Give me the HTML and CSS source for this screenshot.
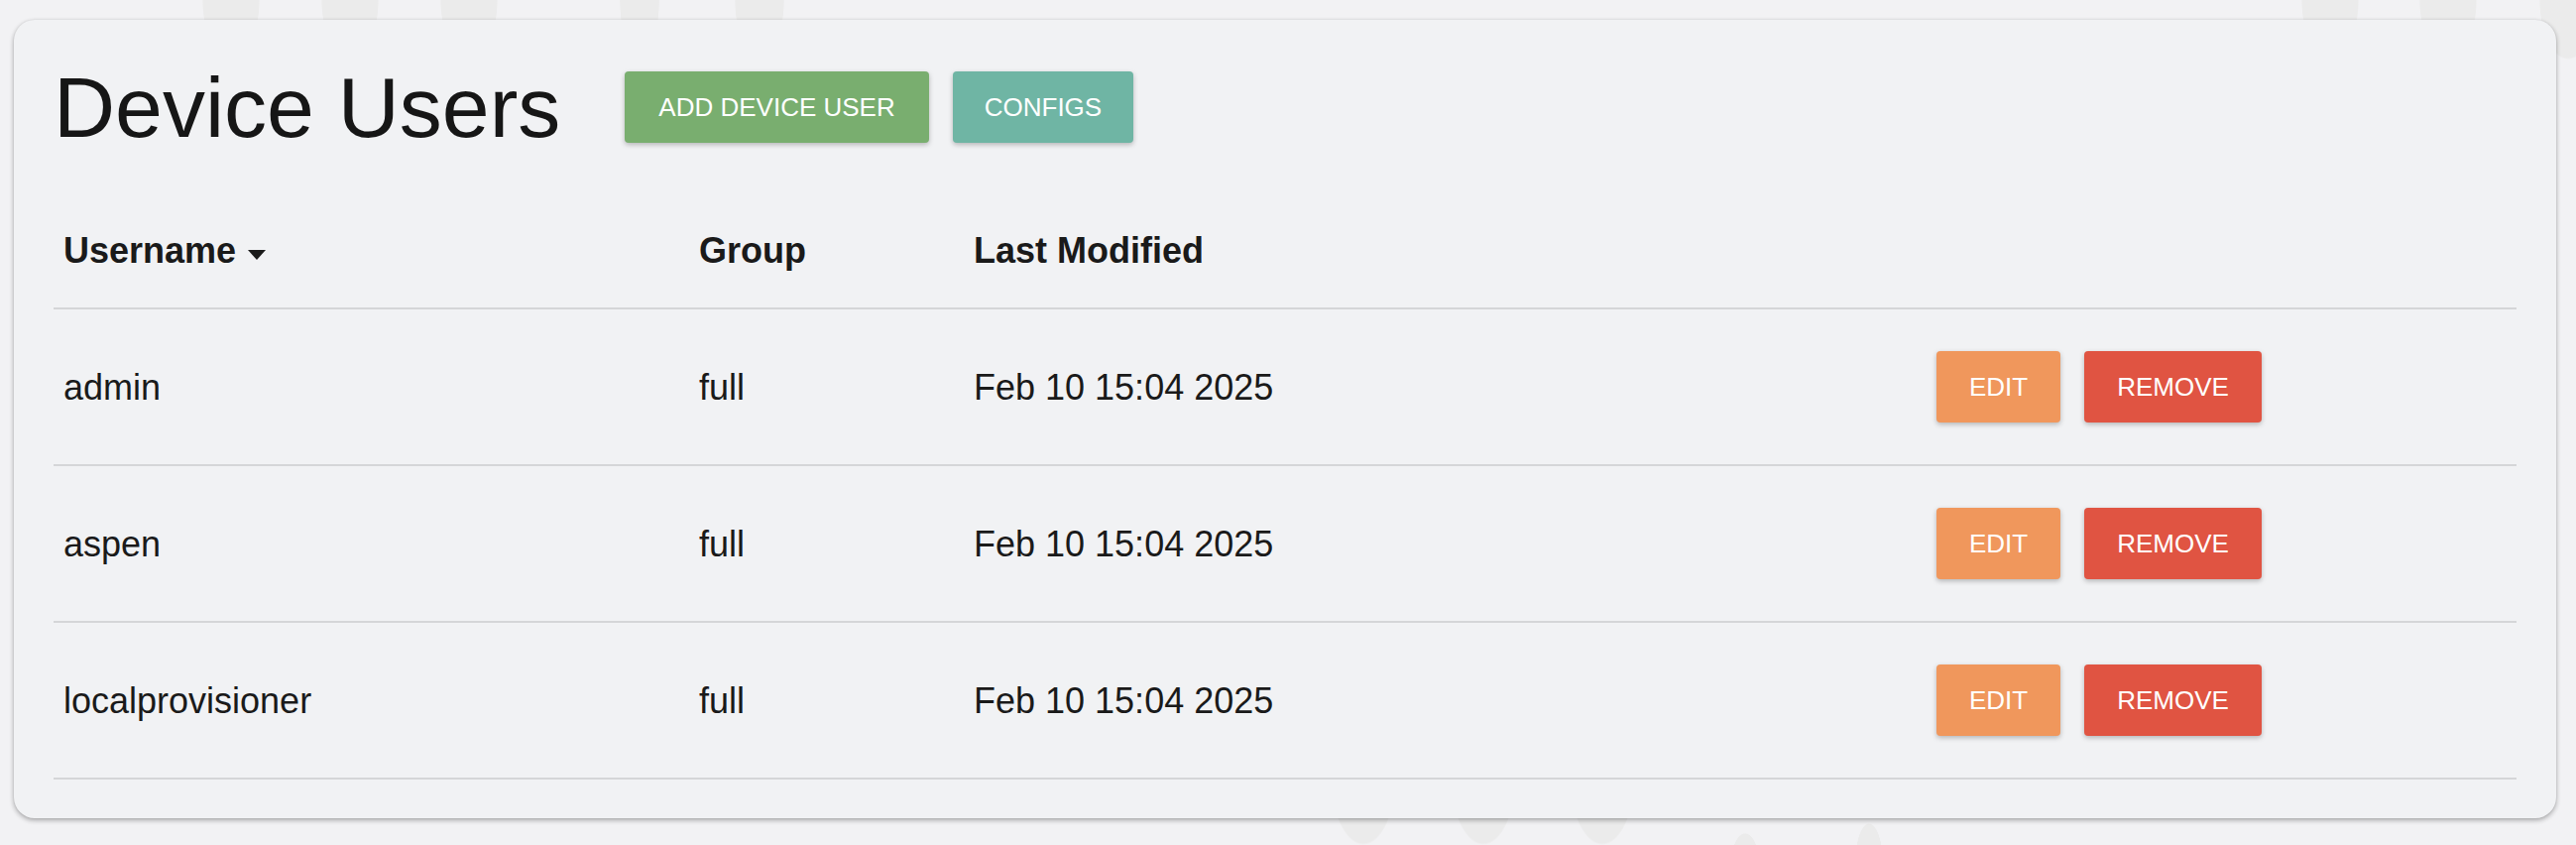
FILE: index.html
```html
<!DOCTYPE html>
<html lang="en">
<head>
<meta charset="utf-8">
<title>Device Users</title>
<link rel="stylesheet" href="styles.css">
</head>
<body>
<main class="card">
  <div class="title-row">
    <h1 class="title">Device Users</h1>
    <div class="title-actions">
      <button class="btn btn-green">ADD DEVICE USER</button>
      <button class="btn btn-teal">CONFIGS</button>
    </div>
  </div>
  <div class="table">
    <div class="row head">
      <div class="cell">Username<span class="sort-arrow"></span></div>
      <div class="cell">Group</div>
      <div class="cell">Last Modified</div>
      <div class="cell"></div>
    </div>
    <div class="row">
      <div class="cell">admin</div>
      <div class="cell">full</div>
      <div class="cell">Feb 10 15:04 2025</div>
      <div class="cell actions"><button class="btn btn-orange">EDIT</button><button class="btn btn-red">REMOVE</button></div>
    </div>
    <div class="row">
      <div class="cell">aspen</div>
      <div class="cell">full</div>
      <div class="cell">Feb 10 15:04 2025</div>
      <div class="cell actions"><button class="btn btn-orange">EDIT</button><button class="btn btn-red">REMOVE</button></div>
    </div>
    <div class="row">
      <div class="cell">localprovisioner</div>
      <div class="cell">full</div>
      <div class="cell">Feb 10 15:04 2025</div>
      <div class="cell actions"><button class="btn btn-orange">EDIT</button><button class="btn btn-red">REMOVE</button></div>
    </div>
  </div>
</main>
</body>
</html>
```
FILE: styles.css
```css
html, body {
  height: 100%;
}
body {
  margin: 0;
  overflow: hidden;
  font-family: "Liberation Sans", Arial, sans-serif;
  color: #1a1a1a;
  background-color: #f2f2f4;
  background-image:
    radial-gradient(29px 60px at 233px 0px, #ebebeb 97%, transparent 100%),
    radial-gradient(29px 60px at 353px 0px, #ebebeb 97%, transparent 100%),
    radial-gradient(29px 60px at 473px 0px, #ebebeb 97%, transparent 100%),
    radial-gradient(20px 60px at 645px 0px, #ebebeb 97%, transparent 100%),
    radial-gradient(25px 60px at 766px 0px, #ebebeb 97%, transparent 100%),
    radial-gradient(14px 40px at 903px 60px, #ebebeb 97%, transparent 100%),
    radial-gradient(29px 60px at 2350px 0px, #ebebeb 97%, transparent 100%),
    radial-gradient(29px 60px at 2469px 0px, #ebebeb 97%, transparent 100%),
    radial-gradient(29px 60px at 2590px 0px, #ebebeb 97%, transparent 100%),
    radial-gradient(33px 70px at 1375px 782px, #ebebeb 97%, transparent 100%),
    radial-gradient(33px 70px at 1496px 782px, #ebebeb 97%, transparent 100%),
    radial-gradient(33px 70px at 1616px 782px, #ebebeb 97%, transparent 100%),
    radial-gradient(14px 30px at 1760px 870px, #ebebeb 97%, transparent 100%),
    radial-gradient(14px 40px at 1885px 870px, #ebebeb 97%, transparent 100%);
  background-repeat: no-repeat;
}

.card {
  margin: 20px 20px 0 14px;
  padding: 45px 40px 39px;
  background: #f1f2f4;
  border-radius: 21px;
  box-shadow: 0 2px 5px rgba(0, 0, 0, 0.32), 0 0 2px rgba(0, 0, 0, 0.08);
}

.title-row {
  display: flex;
  align-items: center;
  height: 86px;
}
.title {
  margin: 0;
  font-size: 86px;
  line-height: 86px;
  font-weight: 400;
  color: #161616;
}
.title-actions {
  display: flex;
  gap: 24px;
  margin-left: 65px;
}

.btn {
  display: inline-flex;
  align-items: center;
  justify-content: center;
  height: 72px;
  padding: 0 34px;
  border: none;
  border-radius: 4px;
  color: #ffffff;
  font-family: "Liberation Sans", Arial, sans-serif;
  font-size: 26px;
  box-shadow: 0 2px 5px rgba(0, 0, 0, 0.25);
}
.btn-green { background: #79ae6f; }
.btn-teal { background: #6fb5a4; padding: 0 32px; }
.btn-orange { background: #f0975c; padding: 0 33px; }
.btn-red { background: #e05442; padding: 0 33px; }

.table {
  margin-top: 44px;
}
.row {
  display: grid;
  grid-template-columns: 641px 277px 971px 1fr;
  align-items: center;
  height: 156px;
  border-bottom: 2px solid #d5d6d8;
  font-size: 36px;
  line-height: 43px;
}
.row.head {
  height: 115px;
  font-weight: 700;
}
.cell {
  padding-left: 10px;
}
.sort-arrow {
  display: inline-block;
  margin-left: 12px;
  width: 0;
  height: 0;
  border-left: 9.5px solid transparent;
  border-right: 9.5px solid transparent;
  border-top: 10px solid #1a1a1a;
  vertical-align: 3px;
}
.actions {
  display: flex;
  gap: 24px;
}
```
